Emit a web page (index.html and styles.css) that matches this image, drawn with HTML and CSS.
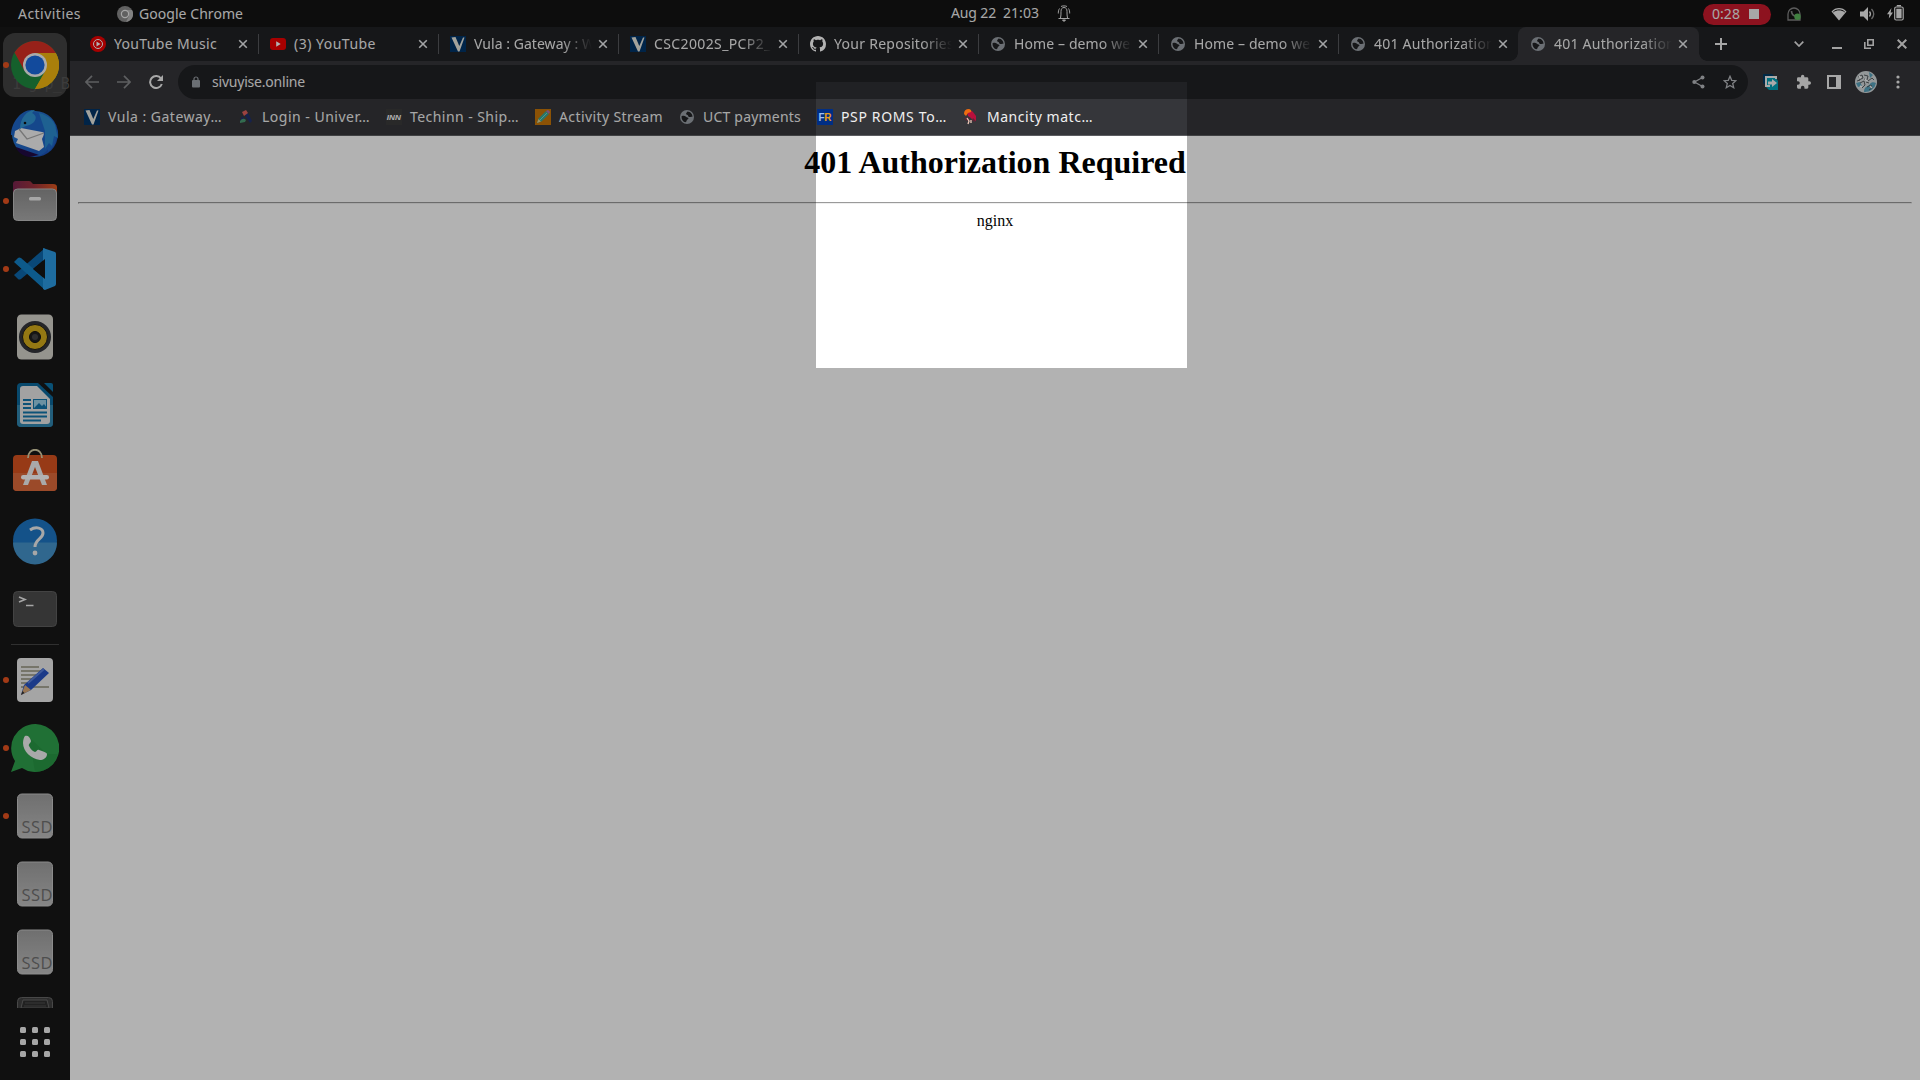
FILE: index.html
```html
<!DOCTYPE html>
<html lang="en">
<head>
<meta charset="utf-8">
<title>401 Authorization Required</title>
<link rel="stylesheet" href="styles.css">
</head>
<body>
<svg class="defs" width="0" height="0">
  <defs>
    <linearGradient id="ssdg" x1="0" y1="0" x2="0" y2="1"><stop offset="0" stop-color="#a0a0a0"/><stop offset="1" stop-color="#c0c0c0"/></linearGradient>
    <linearGradient id="fold" x1="0" y1="0" x2="1" y2="0"><stop offset="0" stop-color="#7b2450"/><stop offset=".5" stop-color="#a0343c"/><stop offset="1" stop-color="#e25a20"/></linearGradient>
    <linearGradient id="grey" x1="0" y1="0" x2="0" y2="1"><stop offset="0" stop-color="#8f8f8f"/><stop offset="1" stop-color="#acacac"/></linearGradient>
    <linearGradient id="tb" x1="0" y1="0" x2="1" y2="1"><stop offset="0" stop-color="#2a86dd"/><stop offset="1" stop-color="#1a4bb4"/></linearGradient>
  </defs>
  <symbol id="globe" viewBox="0 0 16 16"><circle cx="8" cy="8" r="7" fill="#9aa0a6"/><path d="M2.500 7.200c2-.6 3.500-.4 4.500.6.8.9 2.300.4 2.500 1.500.1 1-1.500 1-1.700 2-.1.9-.6 1.500-1.300 2C4 12.800 2.300 10.500 2.500 7.200zM8.500 2.500 7.200 4.300c-.4 1.200.6 1.400 1.400 1.700.8.400.3 1.500 1.400 1.900 1.200.3 1.900-.6 3.500-.1C13.500 5 11.500 2.700 8.500 2.500z" class="land"/></symbol>
  <symbol id="vula" viewBox="0 0 16 16"><path d="M0 0h16v16H0z" fill="#003468"/><path d="M1.500 1.500 5.500 1l3.800 9L13 1.500h1.500L9.500 15.500H8z" fill="#e8e8e0"/></symbol>
  <symbol id="x" viewBox="0 0 10 10"><path d="m1.200 1.200 7.600 7.600m0-7.600L1.200 8.800" stroke="#e8eaed" stroke-width="1.600" fill="none"/></symbol>
  <symbol id="ssd" viewBox="0 0 48 48"><rect x="6.500" y="2" width="35" height="44" rx="4.500" fill="url(#ssdg)" stroke="#c8c8c8" stroke-width="1"/><text x="10.500" y="41" textLength="31" font-family="Open Sans, sans-serif" font-size="16.500" fill="#707070">SSD</text></symbol>
</svg>

<div class="screen">
  <header class="topbar">
    <div class="tb-left">
      <span data-w="63">Activities</span>
      <span class="app"><svg width="16" height="16" viewBox="0 0 16 16"><circle cx="8" cy="8" r="8" fill="#8c8c8c"/><path d="M8 4h7a8 8 0 0 1-6 12l3-6z" fill="#b9b9b9"/><circle cx="8" cy="8" r="3.600" fill="#8a8a8a" stroke="#eee" stroke-width="1.200"/></svg><span data-w="104">Google Chrome</span></span>
    </div>
    <div class="tb-mid"><span data-w="45">Aug 22</span><span data-w="36">21:03</span>
      <svg class="bell" width="14" height="17" viewBox="0 0 14 17" fill="none" stroke="#e6e6e6" stroke-width="1"><path d="M1.500 13.500h11M3.500 13c.5-2 .5-4 .5-6.500C4 4 5 2.500 7 2.500s3 1.500 3 4c0 2.500 0 4.500.5 6.500M2.500 3.500C1.500 5 1.300 6.500 1.300 8.500M11.500 3.500c1 1.500 1.200 3 1.200 5M4 1.500C5 .7 9 .7 10 1.500"/><path d="M5.500 15h3L7 16.500z" fill="#e6e6e6"/></svg>
    </div>
    <div class="tb-right">
      <span class="rec"><span data-w="28">0:28</span><i></i></span>
      <svg class="wa" width="14" height="14" viewBox="0 0 14 14"><path d="M1 13V7a6 6 0 1 1 12 0v6z" fill="none" stroke="#858585" stroke-width="1.300"/><path d="M4.500 4c0 3 2 5 5 5.500" fill="none" stroke="#858585" stroke-width="1.700"/><circle cx="10.500" cy="9.800" r="3.200" fill="#5cb85c"/></svg>
      <svg class="wifi" width="16" height="14" viewBox="0 0 16 14"><path d="M.5 4.500c4-4.600 11-4.600 15 0L8 13.500z" fill="#f0f0f0"/><path d="M2.300 4.900c3.300-2.700 8.100-2.700 11.400 0" stroke="#131313" fill="none"/></svg>
      <svg class="vol" width="15" height="14" viewBox="0 0 15 14"><path d="M0 4.500h3.500L8 0v14L3.500 9.500H0z" fill="#f0f0f0"/><path d="M9.500 4.500q2 2.500 0 5" fill="none" stroke="#f0f0f0" stroke-width="1.300"/><path d="M11.500 2q4.500 5 0 10" fill="none" stroke="#999" stroke-width="1.300"/></svg>
      <svg class="bat" width="17" height="16" viewBox="0 0 17 16"><path d="M4.500 3 0 9.200h2.300L1.800 13.500 6 7.500H3.600z" fill="#f0f0f0"/><rect x="7.700" y="2" width="8.500" height="13" rx="1.500" fill="none" stroke="#f0f0f0" stroke-width="1.200"/><path d="M9.300 3.800h5.300v9.500H9.300zM9.800 0h4.200v1.600H9.800z" fill="#f0f0f0"/></svg>
    </div>
  </header>

  <div class="body">
    <nav class="dock">
      <div class="apps">
        <div class="item run"><div class="tile"><span class="ghost">1 g p_B</span><svg width="48" height="48" viewBox="0 0 48 48"><circle cx="24" cy="24" r="24" fill="#1f8a40"/><path d="M24 24 45 12.500A24 24 0 0 1 24 48l10.500-18z" fill="#f2b610"/><path d="M3.500 11.500A24 24 0 0 1 44.800 12H24L13.600 30z" fill="#d93025"/><path d="M24 12h20.800A24 24 0 0 1 24 48l10.400-18z" fill="#f2b610"/><circle cx="24" cy="24" r="12" fill="#f4f4f4"/><circle cx="24" cy="24" r="9.600" fill="#1a6be0"/></svg></div></div>
        <div class="item"><svg width="48" height="48" viewBox="0 0 48 48"><circle cx="24" cy="25" r="23" fill="url(#tb)"/><path d="M0 26C0 14 10 0 22 1l-2 2c14 0 24 8 25 17 2 1 2.500 4 2 8l-2-1c0 7-3 12-8 16l0-3c-3 4-7 7-12 7L33 30z" fill="#1f66c8"/><path d="M28 4c10 2 17 9 17 17l2 8-4-2-2 10-3-3-4 6 0-18z" fill="#2b8bd0"/><path d="M5 38 28 46 18 48C12 47 6 43 5 38z" fill="#220b44"/><path d="M4 22 10 19 31 23c3 0 2 3 0 7l2 8-5 4L5 34 7 30 3 28z" fill="#f5f5f5"/><path d="m8 20 8 10 17-6" fill="none" stroke="#aaa" stroke-width="1.300"/><path d="M9 20C9 9 16 1 24 1l-3 3c4 2 5 5 2 9-4 4-8 3-14 7z" fill="#3296d4"/><circle cx="14" cy="14" r="1.300" fill="#111"/></svg></div>
        <div class="item run"><svg width="48" height="48" viewBox="0 0 48 48"><path d="M2 7q0-3 3-3h13q2 0 3 2l1 1h20q4 0 4 3v14H2z" fill="url(#fold)"/><rect x="2.500" y="12" width="43" height="31.500" rx="4" fill="url(#grey)" stroke="#c0c0c0"/><rect x="18" y="20" width="12" height="3.500" rx="1.500" fill="#f0f0f0"/></svg></div>
        <div class="item run"><svg width="48" height="48" viewBox="0 0 48 48"><path d="m3 30 4 4q1 1 3 0L34 14V3z" fill="#0d68ac"/><path d="m3 17 4-4q1-1 3 0l24 21v11z" fill="#1482c8"/><path d="M32 3 44 7q1 .5 1 2v30q0 1-1 2L34 45l-2-1z" fill="#2c9be4"/><path d="M34 14v20L22 24z" fill="#151515"/></svg></div>
        <div class="item"><svg width="48" height="48" viewBox="0 0 48 48"><rect x="6" y="1.500" width="36" height="45" rx="4.500" fill="#d6d4cc"/><circle cx="24" cy="24" r="16" fill="#34363c"/><circle cx="24" cy="24" r="12.500" fill="#d4ac1c" stroke="#1a1a1a"/><circle cx="24" cy="24" r="5.500" fill="#222" stroke="#111"/><circle cx="24" cy="24" r="3" fill="#444"/></svg></div>
        <div class="item"><svg width="48" height="48" viewBox="0 0 48 48"><path d="M10 2h17l15 14v27q0 3-4 3H10q-4 0-4-4V6q0-4 4-4z" fill="#0c699c"/><path d="M6 24h36v18q0 4-4 4H10q-4 0-4-4z" fill="#3187b0"/><path d="M12 5h14l13 13v22q0 3-3 3H12q-3 0-3-3V8q0-3 3-3z" fill="#e8e8e8"/><path d="M33 2h7q2 0 2 2v7z" fill="#0e75aa"/><path d="M12 19h8m-8 4h8m-8 4h8m-8 4.500h24m-24 4h24m-24 4h18" stroke="#1276ac" stroke-width="2"/><rect x="22.500" y="18.500" width="13" height="9" fill="#9ad0e8" stroke="#1276ac"/><path d="m23 27 5-5 3 3 2-2 3 4z" fill="#1276ac"/></svg></div>
        <div class="item"><svg width="48" height="48" viewBox="0 0 48 48"><rect x="2" y="6" width="44" height="36" rx="4" fill="#d95420"/><path d="M2 24h44v14q0 4-4 4H6q-4 0-4-4z" fill="#df6a3c"/><path d="M17 9c0-11 14-11 14 0" fill="none" stroke="#d8d0a8" stroke-width="1.800"/><path d="m21 12-9 24h5l7-18 7 18h5l-9-24z" fill="#f2f2f2"/><rect x="10" y="26" width="28" height="4.500" rx="2.200" fill="#fff"/></svg></div>
        <div class="item"><svg width="48" height="48" viewBox="0 0 48 48"><circle cx="24" cy="23.500" r="22" fill="#1d76c4"/><path d="M2 25.500h44a22 22 0 0 1-44 0z" fill="#4594cc"/><path d="M19 13c6-4 13-2 13 3 0 6-8 6-8 14" fill="none" stroke="#f0f0f0" stroke-width="3"/><circle cx="24" cy="36" r="2.400" fill="#f0f0f0"/></svg></div>
        <div class="item"><svg width="48" height="48" viewBox="0 0 48 48"><rect x="2.500" y="6.500" width="43" height="35" rx="4" fill="#4c4c4c" stroke="#606060"/><path d="m8 12 6 2.500L8 17M15 20.500h7.500" fill="none" stroke="#eee" stroke-width="1.600"/></svg></div>
        <div class="rule"></div>
        <div class="item run"><svg width="48" height="48" viewBox="0 0 48 48"><rect x="6" y="2" width="36" height="44" rx="4" fill="#ececec"/><path d="M10 11h18M10 15h22M10 19h18M10 23h14M10 27h11M10 31h28" stroke="#aaa898" stroke-width="2"/><path d="m10 39 3-10 19-17 6 5-18 17z" fill="#2754c4"/><path d="m10 39 4-10 6 5z" fill="#d8a878"/><path d="m10 39 1.500-4 2 2z" fill="#333"/><path d="m17 27 16-14" stroke="#5b82e0" stroke-width="2"/></svg></div>
        <div class="item run"><svg width="48" height="48" viewBox="0 0 48 48"><path d="M24 0a24 24 0 1 1-13 44L0 48l4-11A24 24 0 0 1 24 0z" fill="#2fa14c"/><path d="m17 12 19 18 11 0a24 24 0 0 1-23 18L22 36z" fill="#249040" opacity=".5"/><path d="M14 12c3-1 5 1 6 5 0 2-3 3-2 5 2 4 4 5 6 6 2 0 2-3 4-2 4 1 8 3 8 4 0 4-4 6-7 6-9-1-17-9-17-17 0-3 1-6 2-7z" fill="#f2f2f2"/></svg></div>
        <div class="item run"><svg width="48" height="48"><use href="#ssd"/></svg></div>
        <div class="item"><svg width="48" height="48"><use href="#ssd"/></svg></div>
        <div class="item"><svg width="48" height="48"><use href="#ssd"/></svg></div>
        <div class="item"><svg width="48" height="48" viewBox="0 0 48 48"><rect x="6.500" y="1.500" width="35" height="45" rx="4" fill="#414141" stroke="#686868"/><path d="M10 12 12 4h24l2 8z" fill="#303030" stroke="#6a6a6a"/><path d="M14 7h20M13 10h22" stroke="#505050"/></svg></div>
      </div>
      <div class="grid"><i></i><i></i><i></i><i></i><i></i><i></i><i></i><i></i><i></i></div>
    </nav>

    <main class="browser">
      <div class="tabs">
        <div class="tab"><svg width="16" height="16" viewBox="0 0 16 16"><circle cx="8" cy="8" r="8" fill="#f00000"/><circle cx="8" cy="8" r="4.500" fill="none" stroke="#fff"/><path d="m6.500 5.500 4 2.500-4 2.500z" fill="#fff"/></svg><span class="tt"><span data-w="103">YouTube Music</span></span><svg class="cl" width="10" height="10"><use href="#x"/></svg></div>
        <div class="tab"><svg width="16" height="16" viewBox="0 0 16 16"><rect y="2" width="16" height="12" rx="3" fill="#f00000"/><path d="m6.200 5.300 4.500 2.700-4.500 2.700z" fill="#fff"/></svg><span class="tt"><span data-w="82">(3) YouTube</span></span><svg class="cl" width="10" height="10"><use href="#x"/></svg></div>
        <div class="tab"><svg width="16" height="16"><use href="#vula"/></svg><span class="tt fade"><span data-w="121">Vula : Gateway : W</span></span><svg class="cl" width="10" height="10"><use href="#x"/></svg></div>
        <div class="tab"><svg width="16" height="16"><use href="#vula"/></svg><span class="tt fade"><span data-w="126">CSC2002S_PCP2_A</span></span><svg class="cl" width="10" height="10"><use href="#x"/></svg></div>
        <div class="tab"><svg width="16" height="16" viewBox="0 0 16 16"><path fill="#fff" d="M8 0C3.580 0 0 3.580 0 8c0 3.540 2.290 6.530 5.470 7.590.4.070.55-.17.55-.38 0-.19-.010-.82-.010-1.490-2.010.37-2.530-.49-2.690-.94-.09-.23-.48-.94-.82-1.130-.28-.15-.68-.52-.010-.53.63-.010 1.080.58 1.230.82.72 1.210 1.870.87 2.330.66.070-.52.28-.87.510-1.070-1.780-.2-3.640-.89-3.640-3.950 0-.87.31-1.590.82-2.150-.08-.2-.36-1.020.08-2.120 0 0 .67-.21 2.200.82.64-.18 1.320-.27 2-.27s1.360.09 2 .27c1.530-1.040 2.200-.82 2.200-.82.44 1.100.16 1.920.08 2.120.51.56.82 1.270.82 2.150 0 3.070-1.870 3.750-3.650 3.950.29.25.54.73.54 1.480 0 1.070-.010 1.930-.010 2.200 0 .21.15.46.55.38A8.010 8.010 0 0 0 16 8c0-4.420-3.580-8-8-8z"/></svg><span class="tt fade"><span data-w="120">Your Repositories</span></span><svg class="cl" width="10" height="10"><use href="#x"/></svg></div>
        <div class="tab"><svg width="16" height="16"><use href="#globe"/></svg><span class="tt fade"><span data-w="125">Home – demo web</span></span><svg class="cl" width="10" height="10"><use href="#x"/></svg></div>
        <div class="tab"><svg width="16" height="16"><use href="#globe"/></svg><span class="tt fade"><span data-w="125">Home – demo web</span></span><svg class="cl" width="10" height="10"><use href="#x"/></svg></div>
        <div class="tab last"><svg width="16" height="16"><use href="#globe"/></svg><span class="tt fade"><span data-w="121">401 Authorization</span></span><svg class="cl" width="10" height="10"><use href="#x"/></svg></div>
        <div class="tab active"><svg width="16" height="16"><use href="#globe"/></svg><span class="tt fade"><span data-w="121">401 Authorization</span></span><svg class="cl" width="10" height="10"><use href="#x"/></svg></div>
        <svg class="plus" width="12" height="12" viewBox="0 0 12 12"><path d="M6 0v12M0 6h12" stroke="#eee" stroke-width="2"/></svg>
        <div class="win">
          <svg width="10" height="6" viewBox="0 0 10 6"><path d="m.7.7 4.300 4.300L9.300.7" fill="none" stroke="#e8e8e8" stroke-width="1.700"/></svg>
          <svg class="min" width="10" height="10" viewBox="0 0 10 10"><path d="M0 9h10" stroke="#e8e8e8" stroke-width="2"/></svg>
          <svg class="restore" width="10" height="10" viewBox="0 0 10 10"><path d="M3.800.8h5.400v5.400H3.800zM.8 3v6.200H7" fill="none" stroke="#e8e8e8" stroke-width="1.600"/></svg>
          <svg class="close" width="10" height="10" viewBox="0 0 10 10"><path d="m.7.7 8.600 8.600m0-8.600L.7 9.300" stroke="#e8e8e8" stroke-width="2"/></svg>
        </div>
      </div>

      <div class="toolbar">
        <div class="navs">
          <svg width="14" height="14" viewBox="0 0 14 14"><path d="M14 7H1.500M7 .8.900 7 7 13.200" fill="none" stroke="#87888b" stroke-width="1.700"/></svg>
          <svg width="14" height="14" viewBox="0 0 14 14"><path d="M0 7h12.500M7 .8 13.100 7 7 13.200" fill="none" stroke="#87888b" stroke-width="1.700"/></svg>
          <svg width="14" height="14" viewBox="0 0 14 14"><path d="M12 3.500A6 6 0 1 0 12.800 9" fill="none" stroke="#f0f0f0" stroke-width="2"/><path d="M14 0v6H8z" fill="#f0f0f0"/></svg>
        </div>
        <div class="omni">
          <svg width="8" height="12" viewBox="0 0 8 12"><rect y="4" width="8" height="7.500" rx="1" fill="#9aa0a6"/><path d="M2 5V3a2 2 0 0 1 4 0v2" fill="none" stroke="#9aa0a6" stroke-width="1.200"/></svg>
          <span class="url" data-w="93">sivuyise.online</span>
          <svg class="share" width="13" height="14" viewBox="0 0 13 14"><path d="M10.500 2.500 2.500 7l8 4.500" fill="none" stroke="#b8bbbf" stroke-width="1.300"/><g fill="#b8bbbf"><circle cx="10.500" cy="2.400" r="2"/><circle cx="2.300" cy="7" r="2"/><circle cx="10.500" cy="11.600" r="2"/></g></svg>
          <svg width="14" height="14" viewBox="0 0 14 14"><path d="m7 1.300 1.700 4 4.200.4-3.200 2.800 1 4.200L7 10.500l-3.700 2.200 1-4.200L1.100 5.700l4.200-.4z" fill="none" stroke="#b8bbbf" stroke-width="1.300"/></svg>
        </div>
        <div class="exts">
          <svg width="16" height="16" viewBox="0 0 16 16"><path d="M3 4h10l2 3v9H6l-3-3z" fill="#00a3b8"/><path d="M0 0h9l2 2H2v9L0 9z" fill="#003b64"/><path d="M13 5V3H3v9h4" fill="none" stroke="#f4f4f4" stroke-width="2"/><path d="M5 7.500h4V5l5 4-5 4v-2.500H5z" fill="#f4f4f4"/></svg>
          <svg width="16" height="16" viewBox="0 0 24 24"><path fill="#ececec" d="M21.500 11H20V7a2 2 0 0 0-2-2h-4V3.500a2.500 2.500 0 0 0-5 0V5H5a2 2 0 0 0-2 2v3.800h1.500a2.700 2.700 0 0 1 0 5.400H3V20a2 2 0 0 0 2 2h3.800v-1.500a2.700 2.700 0 0 1 5.400 0V22H18a2 2 0 0 0 2-2v-4h1.500a2.500 2.500 0 0 0 0-5z"/></svg>
          <svg width="16" height="16" viewBox="0 0 16 16"><path d="M2 2h12v12H2z" fill="none" stroke="#f0f0f0" stroke-width="2"/><path d="M10 2h4v12h-4z" fill="#f0f0f0"/></svg>
          <svg class="avatar" width="22" height="22" viewBox="0 0 22 22"><circle cx="11" cy="11" r="11" fill="#d4dadc"/><path d="M9 21c0-6 4-5 6-8 1-2 4-2 6-1a11 11 0 0 1-12 9zM14 1l4 3-3 3zM1 12l4-1 2 4-4 1z" fill="#5aa4be"/><path d="m3 6 4-2 1 3-4 2m5-5 4 1-1 4-3-1m4 2 4-3 2 2M5 12l4-2 1 4-3 3M2 10l3-1M12 16l4-2 1 3-3 2M11 11l3 1" fill="none" stroke="#4a4f52" stroke-width=".9"/><path d="m4 5 2 2m4 1 2 2m-7 5 2 1m8-1 2 2" stroke="#fff" stroke-width="1.400"/></svg>
          <svg class="kebab" width="4" height="14" viewBox="0 0 4 14" fill="#f0f0f0"><circle cx="2" cy="2" r="1.600"/><circle cx="2" cy="7" r="1.600"/><circle cx="2" cy="12" r="1.600"/></svg>
        </div>
      </div>

      <div class="marks">
        <div class="bm"><svg width="16" height="16"><use href="#vula"/></svg><span data-w="114">Vula : Gateway…</span></div>
        <div class="bm"><svg width="16" height="16" viewBox="0 0 16 16"><path d="m6 5 4-1 4 8-2 2z" fill="#20306e"/><path d="m4 3 4-2 2 3-4 3z" fill="#e0605c"/><path d="m4 7-2 5 6-1z" fill="#20306e"/><path d="M2 12q3-4 6-1l-1 2-5 1z" fill="#4a9a72"/></svg><span data-w="108">Login - Univer…</span></div>
        <div class="bm"><svg width="16" height="16" viewBox="0 0 16 16"><path d="M0 0h16v16H0z" fill="#3b3b3b"/><text x=".8" y="10.500" textLength="14" lengthAdjust="spacingAndGlyphs" font-family="Liberation Sans" font-weight="bold" font-style="italic" font-size="7" fill="#fff">INN</text></svg><span data-w="109">Techinn - Ship…</span></div>
        <div class="bm"><svg width="16" height="16" viewBox="0 0 16 16"><path d="M0 0h16v16H0z" fill="#c87608"/><path d="m2 14 1.500-4.500L11 2l3 3-7.500 7.500z" fill="#38a898"/><path d="m11 2 2-1 2 2-1 2z" fill="#b070b0"/><path d="m2 14 1.500-4 2.500 2.500z" fill="#e4d090"/><path d="m5 11 7-7" stroke="#76d8c0" stroke-width="1"/></svg><span data-w="104">Activity Stream</span></div>
        <div class="bm"><svg width="16" height="16"><use href="#globe"/></svg><span data-w="98">UCT payments</span></div>
        <div class="bm"><svg width="16" height="16" viewBox="0 0 16 16"><path d="M0 0h16v16H0z" fill="#002e84"/><text x="1.500" y="11.500" font-family="Liberation Sans" font-weight="bold" font-size="10" fill="#9fc0f0" textLength="6">F</text><text x="7.200" y="11.500" font-family="Liberation Sans" font-weight="bold" font-size="10" fill="#e89c18">R</text></svg><span data-w="106">PSP ROMS To…</span></div>
        <div class="bm"><svg width="16" height="16" viewBox="0 0 16 16"><path d="M4 3q4-3 6 0l3 4 0 5-3 0-2-3-3-2z" fill="#b8103c"/><path d="M1 5q0-5 5-5 3 1 2 3L5 4 3 7z" fill="#f06c10"/><path d="m1 10 3-2 2 2-2 2zM10 9l3 3-2 1-2-2z" fill="#5a2636"/><path d="m4 9 2 3-1 3m3-4 0 3" stroke="#f0c8b8" stroke-width="1.300" fill="none"/></svg><span data-w="106">Mancity matc…</span></div>
      </div>

      <div class="page">
        <h1>401 Authorization Required</h1>
        <hr>
        <div>nginx</div>
      </div>
    </main>
  </div>
  <div class="selection"></div>
</div>
<script src="fit.js"></script>
</body>
</html>
```
FILE: styles.css
```css
* { box-sizing: border-box; }
body { margin: 0; background: #171717; font: 14px "Noto Sans", "Open Sans", sans-serif; color: #f0f0f0; overflow: hidden; }
svg { display: block; flex: none; }
.defs { position: absolute; }
.screen { position: relative; width: 1920px; height: 1080px; overflow: hidden; display: flex; flex-direction: column; }
[data-w] { white-space: pre; flex: none; }

.topbar { height: 27px; flex: none; background: #131313; display: grid; grid-template-columns: 951px 1fr auto; align-items: center; font-size: 14px; line-height: 26px; }
.tb-left { display: flex; padding-left: 18px; gap: 36px; align-items: center; }
.app { display: flex; gap: 6px; align-items: center; }
.tb-mid { display: flex; gap: 7px; align-items: center; padding-bottom: 2px; }
.bell { margin-left: 11px; }
.tb-right { display: flex; align-items: center; padding-right: 16px; }
.rec { display: flex; align-items: center; gap: 9px; width: 68px; height: 21px; padding-left: 9px; border-radius: 11px; background: #cb1a2d; }
.rec i { width: 10px; height: 10px; background: #f0f0f0; }
.wa { margin-left: 16px; }
.wifi { margin-left: 30px; }
.vol { margin-left: 13px; }
.bat { margin-left: 12px; margin-bottom: 2px; }

.body { flex: 1; display: flex; min-height: 0; }
.dock { width: 70px; flex: none; background: #171717; display: flex; flex-direction: column; padding-top: 4px; }
.apps { height: 977px; overflow: hidden; flex: none; }
.item { height: 68px; display: flex; align-items: center; justify-content: center; position: relative; }
.run::before { content: ""; position: absolute; left: 3px; top: 31px; width: 6px; height: 6px; border-radius: 50%; background: #e95420; z-index: 1; }
.tile { position: relative; width: 64px; height: 64px; border-radius: 12px; background: #434343; display: flex; align-items: center; justify-content: center; }
.tile svg { position: relative; }
.ghost { position: absolute; left: 9px; bottom: 3px; white-space: nowrap; font: 15px/20px "DejaVu Sans Mono", monospace; letter-spacing: -.9px; color: #565656; }
.rule { height: 1px; margin: 1px 11px; background: #454545; }
.grid { display: grid; grid-template-columns: repeat(3, 6px); gap: 6px; padding: 19px 20px; }
.grid i { height: 6px; border-radius: 1.500px; background: #eee; }

.browser { flex: 1; display: flex; flex-direction: column; min-width: 0; }
.tabs { height: 34px; flex: none; background: #202124; display: flex; padding-left: 8px; align-items: center; }
.tab { position: relative; width: 180px; height: 34px; flex: none; display: flex; align-items: center; padding-left: 12px; }
.tab:not(.last):not(.active)::after { content: ""; position: absolute; right: -1px; top: 7px; width: 1px; height: 20px; background: #56585c; }
.tt { width: 118px; margin-left: 8px; overflow: hidden; display: flex; line-height: 22px; }
.fade { -webkit-mask-image: linear-gradient(to right, #000 88px, transparent 118px); mask-image: linear-gradient(to right, #000 88px, transparent 118px); }
.cl { margin-left: 6px; }
.land { fill: #202124; }
.active { background: #35363a; border-radius: 8px 8px 0 0; width: 181px; }
.active::before, .active::after { content: ""; position: absolute; bottom: 0; width: 8px; height: 8px; }
.active::before { left: -8px; background: radial-gradient(circle at 0 0, transparent 7.500px, #35363a 8px); }
.active::after { right: -8px; background: radial-gradient(circle at 100% 0, transparent 7.500px, #35363a 8px); }
.plus { margin-left: 16px; }
.win { margin-left: auto; padding-right: 13px; display: flex; align-items: center; }
.min { margin-left: 28px; }
.restore { margin-left: 22px; }
.close { margin-left: 23px; }

.toolbar { height: 38px; flex: none; background: #35363a; display: flex; align-items: center; padding: 4px 20px 0 15px; }
.navs { display: flex; gap: 18px; width: 93px; flex: none; }
.omni { width: 1570px; flex: none; height: 34px; border-radius: 17px; background: #202124; display: flex; align-items: center; padding: 0 11px 0 14px; }
.url { margin-left: 12px; margin-top: -2px; }
.share { margin-left: auto; margin-right: 18px; }
.exts { flex: 1; display: flex; align-items: center; gap: 15.500px; padding-left: 15px; }
.avatar { margin-left: -3px; }
.kebab { margin-left: 4px; }

.marks { height: 37px; flex: none; background: #35363a; border-bottom: 1px solid #5c5d61; display: flex; align-items: center; gap: 16px; padding: 0 0 1px 14px; }
.bm { display: flex; align-items: center; gap: 8px; }
.bm span { margin-top: -1px; }

.page { flex: 1; background: #fff; color: #000; padding: 8px; text-align: center; font: 16px "Liberation Serif", serif; }
h1 { margin: 0 0 21.440px; font-size: 32px; line-height: 37px; }
hr { margin: 0 0 8px; border: 1px solid; border-color: #9a9a9a #eee #eee #9a9a9a; }

.selection { position: absolute; z-index: 2; left: 816px; top: 82px; width: 371px; height: 286px; box-shadow: 0 0 0 2000px rgba(0, 0, 0, .3); }
```
FILE: fit.js
```js
// Spread each label over its allotted width by adjusting the tracking.
document.querySelectorAll('[data-w]').forEach(function (el) {
  el.style.display = 'inline-block';
  var natural = el.getBoundingClientRect().width;
  var target = Number(el.dataset.w);
  el.style.letterSpacing = ((target - natural) / el.textContent.length) + 'px';
});
```
